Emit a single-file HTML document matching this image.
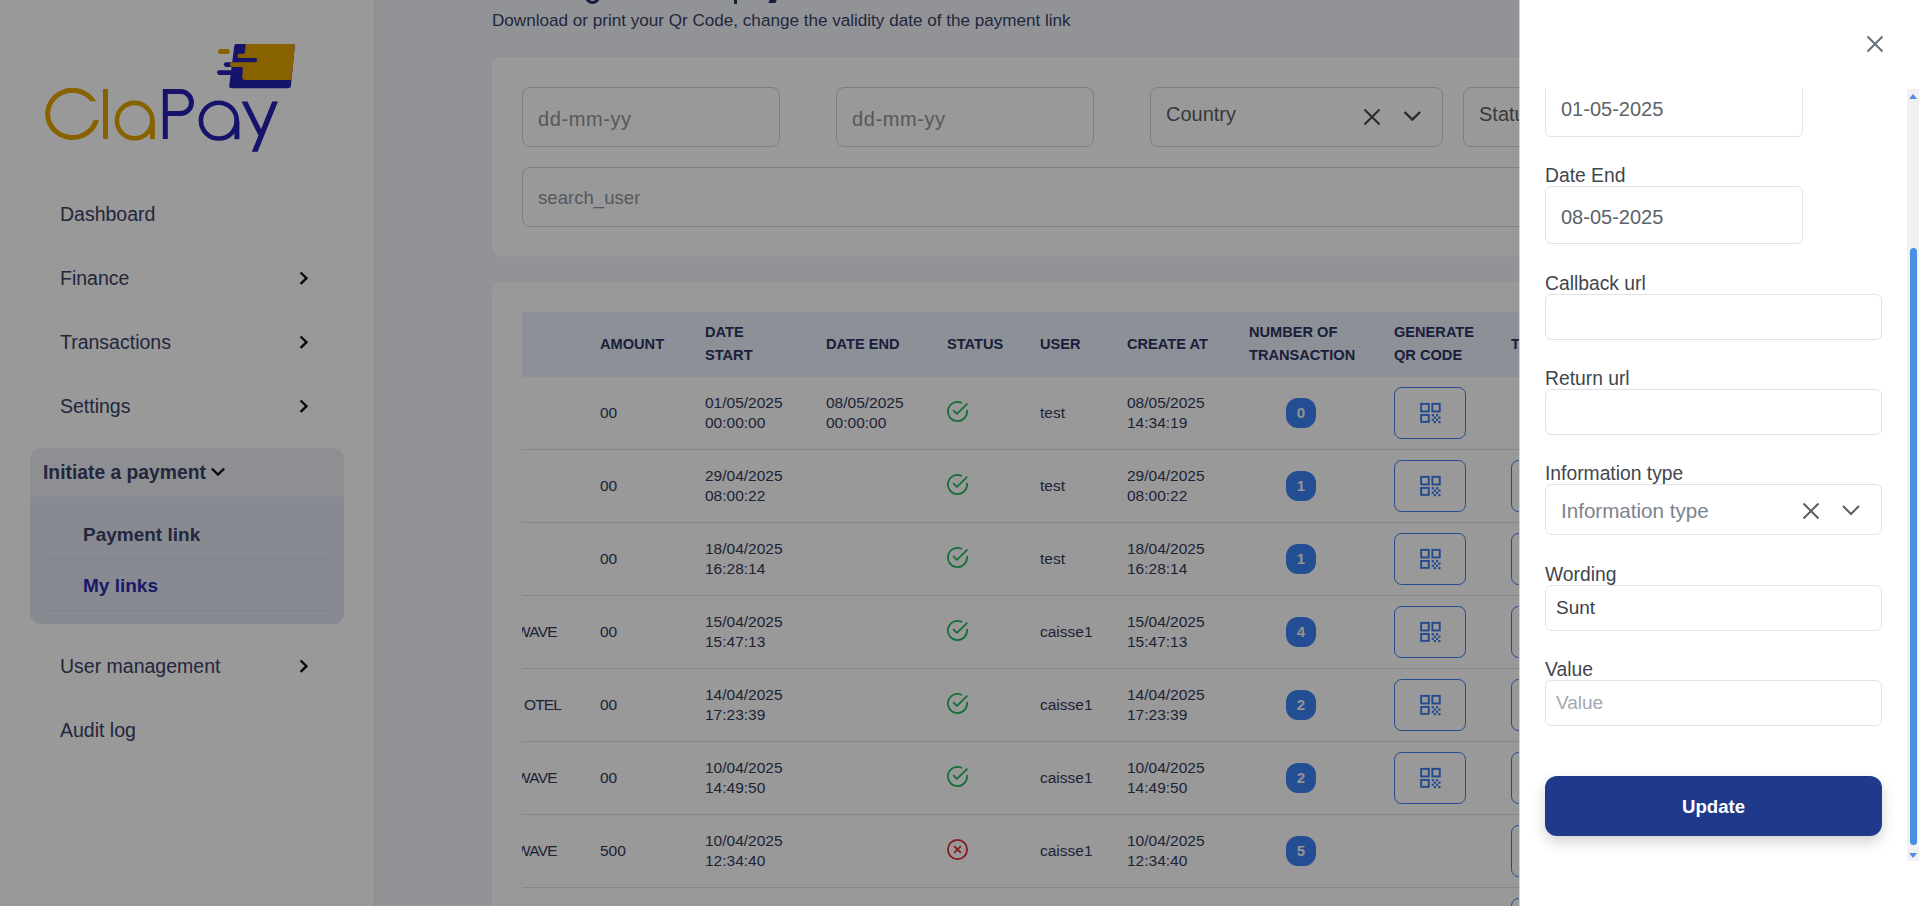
<!DOCTYPE html>
<html><head><meta charset="utf-8">
<style>
*{box-sizing:border-box;margin:0;padding:0}
html,body{width:1919px;height:913px;overflow:hidden;background:#fff;font-family:"Liberation Sans",sans-serif}
.abs{position:absolute}
#page{position:absolute;left:0;top:0;width:1919px;height:906px;background:#f4f6fc;overflow:hidden}
#sidebar{position:absolute;left:0;top:0;width:375px;height:906px;background:#fff;border-right:1px solid #e3e4e8}
.nav{position:absolute;left:60px;font-size:19.5px;color:#3a4166;white-space:nowrap;line-height:1}
.chev{position:absolute;left:300px;width:9px;height:14px}
.card{position:absolute;background:#fff;border:1px solid #f0f1f5;border-radius:10px}
.inp{position:absolute;border:1px solid #cfd3d8;border-radius:8px;background:#fff}
.ph{position:absolute;font-size:20px;color:#8e9399;white-space:nowrap;line-height:1}
.th{position:absolute;font-size:14.6px;font-weight:700;color:#2c3563;line-height:23px;white-space:nowrap}
.td{position:absolute;font-size:15.5px;color:#343a5c;line-height:20px;white-space:nowrap}
.rowline{position:absolute;left:522px;width:1000px;height:1px;background:#dfe1e6}
.badge{position:absolute;width:30px;height:30px;border-radius:12px;background:#3b82f6;color:#f4f4f4;font-size:15px;font-weight:700;text-align:center;line-height:30px}
.qr{position:absolute;width:72px;height:52px;border:1.5px solid #3b7bef;border-radius:7.5px}
.qr svg{position:absolute;left:25px;top:15px}
.tbtn{position:absolute;left:1511px;width:72px;height:52px;border:1.5px solid #3b7bef;border-radius:7.5px}
#overlay{position:absolute;left:0;top:0;width:1520px;height:906px;background:rgba(0,0,0,0.4)}
#panel{position:absolute;left:1519px;top:0;width:400px;height:906px;background:#fff;border-left:1px solid rgba(0,0,0,.175)}
.lbl{position:absolute;left:25px;font-size:19.3px;color:#40464d;white-space:nowrap;line-height:1}
.pin{position:absolute;left:25px;width:337px;border:1px solid #dfe3e8;border-radius:6px;background:#fff}
.val{position:absolute;font-size:20px;color:#5c636a;white-space:nowrap;line-height:1}
</style></head><body>
<div id="page">
  <div id="sidebar">
    <svg class="abs" style="left:0;top:0" width="375" height="170" viewBox="0 0 375 170">
  <path d="M96.3 101.3 A27.3 26.15 0 1 0 99 119.9 L93.8 119.9 A22.3 21.15 0 1 1 90.3 101.3Z" fill="#e5a300"/>
  <rect x="103" y="89" width="5" height="50" fill="#e5a300"/>
  <circle cx="134.6" cy="120.6" r="17.7" fill="none" stroke="#e5a300" stroke-width="4.6"/>
  <rect x="150" y="120.6" width="4.9" height="18.6" fill="#e5a300"/>
  <g fill="none" stroke="#2321b1" stroke-width="5">
    <path d="M165.3 139 V91.5 H180.5 A11 11 0 0 1 180.5 113.5 H165.3"/>

  </g>
  <path d="M241.6 101.5 H247.4 L264 135 H258.2Z M272.2 101.5 H278 L257.6 151.8 H251.8Z" fill="#2321b1"/>
  <circle cx="218.8" cy="120.6" r="17.9" fill="none" stroke="#2321b1" stroke-width="4.6"/>
  <rect x="234.4" y="120.6" width="5" height="18.6" fill="#2321b1"/>
  <path d="M236.5 43.9 H292.6 Q295 43.9 294.8 46.3 L290.9 86 Q290.7 88.3 288.4 88.3 H231.5 Q229 88.3 229.2 86 L234.2 46.2 Q234.4 43.9 236.5 43.9Z" fill="#2321b1"/>
  <path d="M245.8 43.9 H292.6 Q295 43.9 294.8 46.3 L291.5 80 H245 Q242.2 80 242.3 77 L243.3 58 L244.6 53.7Z" fill="#e5a300"/>
  <rect x="237.5" y="53.7" width="16" height="4.6" rx="2.3" fill="#e5a300"/>
  <rect x="236" y="58" width="21" height="4.3" rx="2.1" fill="#2321b1"/>
  <rect x="223.8" y="62.2" width="10" height="4.8" rx="2.4" fill="#2321b1"/>
  <rect x="230" y="62.2" width="18" height="4.8" rx="2.4" fill="#e5a300"/>
  <rect x="217" y="70.2" width="16" height="4.8" rx="2.4" fill="#2321b1"/>
  <rect x="218" y="48.9" width="11.8" height="5" rx="2.5" fill="#e5a300"/>
</svg>
    <div class="nav" style="top:205px">Dashboard</div>
    <div class="nav" style="top:269px">Finance</div><svg class="abs" style="left:298px;top:271px" width="14" height="16" viewBox="0 0 14 16"><path d="M2.6 1.5 L8.5 7.2 L2.6 12.9" fill="none" stroke="#111" stroke-width="2.4"/></svg>
    <div class="nav" style="top:333px">Transactions</div><svg class="abs" style="left:298px;top:335px" width="14" height="16" viewBox="0 0 14 16"><path d="M2.6 1.5 L8.5 7.2 L2.6 12.9" fill="none" stroke="#111" stroke-width="2.4"/></svg>
    <div class="nav" style="top:397px">Settings</div><svg class="abs" style="left:298px;top:399px" width="14" height="16" viewBox="0 0 14 16"><path d="M2.6 1.5 L8.5 7.2 L2.6 12.9" fill="none" stroke="#111" stroke-width="2.4"/></svg>
    <div class="abs" style="left:30px;top:448px;width:314px;height:176px;border-radius:11px;background:#eceff5;overflow:hidden">
      <div class="abs" style="left:0;top:49px;width:314px;height:127px;background:#e2e7f2"></div>
      <div class="abs" style="left:13px;top:465px;"></div>
    </div>
    <div class="nav" style="left:43px;top:463px;font-weight:700;font-size:19.3px">Initiate a payment</div>
    <svg class="abs" style="left:209px;top:465px" width="18" height="14" viewBox="0 0 18 14"><path d="M2.8 3.5 L9 9.6 L15.2 3.5" fill="none" stroke="#111" stroke-width="2.4"/></svg>
    <div class="nav" style="left:83px;top:525px;font-weight:700;font-size:19px">Payment link</div>
    <div class="abs" style="left:43px;top:559px;width:289px;height:1px;background:#d9dde5"></div>
    <div class="nav" style="left:83px;top:576px;font-weight:700;font-size:19px;color:#2b2bb0">My links</div>
    <div class="abs" style="left:43px;top:610px;width:289px;height:1px;background:#d9dde5"></div>
    <div class="nav" style="top:657px">User management</div><svg class="abs" style="left:298px;top:659px" width="14" height="16" viewBox="0 0 14 16"><path d="M2.6 1.5 L8.5 7.2 L2.6 12.9" fill="none" stroke="#111" stroke-width="2.4"/></svg>
    <div class="nav" style="top:721px">Audit log</div>
  </div>
  <div class="abs" style="left:492px;top:-21px;font-size:28px;font-weight:700;color:#2f365c;white-space:nowrap;line-height:1">&nbsp;</div>
  <div class="abs" style="left:585px;top:-4px;width:15px;height:8px;border:3px solid #2a3160;border-top:none;border-radius:0 0 8px 8px"></div>
  <div class="abs" style="left:734px;top:0;width:3px;height:4px;background:#2a3160"></div>
  <div class="abs" style="left:769px;top:0;width:7px;height:3px;background:#2a3160;transform:skewX(-25deg)"></div>
  <div class="abs" style="left:492px;top:11px;font-size:17.1px;color:#3a4166;white-space:nowrap;line-height:20px">Download or print your Qr Code, change the validity date of the payment link</div>
  <div class="card" style="left:491px;top:56px;width:1400px;height:202px"></div>
  <div class="inp" style="left:522px;top:87px;width:258px;height:60px"></div><div class="ph" style="left:538px;top:109px;letter-spacing:0.6px">dd-mm-yy</div>
  <div class="inp" style="left:836px;top:87px;width:258px;height:60px"></div><div class="ph" style="left:852px;top:109px;letter-spacing:0.6px">dd-mm-yy</div>
  <div class="inp" style="left:1150px;top:87px;width:293px;height:60px"></div><div class="ph" style="left:1166px;top:104px;color:#5a6068">Country</div>
  <svg class="abs" style="left:1361px;top:106px" width="22" height="22" viewBox="0 0 22 22"><path d="M3.5 3.5 L18.5 18.5 M18.5 3.5 L3.5 18.5" stroke="#44494f" stroke-width="2" fill="none"/></svg>
  <svg class="abs" style="left:1401px;top:107px" width="22" height="18" viewBox="0 0 22 18"><path d="M3.5 5 L11.3 12.6 L19.1 5" stroke="#44494f" stroke-width="2.4" fill="none"/></svg>
  <div class="inp" style="left:1463px;top:87px;width:293px;height:60px"></div><div class="ph" style="left:1479px;top:104px;color:#5a6068">Status</div>
  <div class="inp" style="left:522px;top:167px;width:1340px;height:60px"></div><div class="ph" style="left:538px;top:189px;font-size:18.6px">search_user</div>
  <div class="card" style="left:491px;top:281px;width:1400px;height:700px"></div>
  <div class="abs" style="left:522px;top:312px;width:1000px;height:65px;background:#ebf0fa"></div>
  <div class="th" style="left:600px;top:333px">AMOUNT</div>
  <div class="th" style="left:705px;top:321px">DATE<br>START</div>
  <div class="th" style="left:826px;top:333px">DATE END</div>
  <div class="th" style="left:947px;top:333px">STATUS</div>
  <div class="th" style="left:1040px;top:333px">USER</div>
  <div class="th" style="left:1127px;top:333px">CREATE AT</div>
  <div class="th" style="left:1249px;top:321px">NUMBER OF<br>TRANSACTION</div>
  <div class="th" style="left:1394px;top:321px">GENERATE<br>QR CODE</div>
  <div class="th" style="left:1511px;top:333px">T</div>
  <div class="td" style="left:600px;top:403.0px">00</div>
  <div class="td" style="left:705px;top:393.0px">01/05/2025<br>00:00:00</div>
  <div class="td" style="left:826px;top:393.0px">08/05/2025<br>00:00:00</div>
  <div class="abs" style="left:946px;top:399.5px;width:23px;height:23px"><svg width="23" height="23" viewBox="0 0 24 24" fill="none" stroke="#22b95c" stroke-width="1.85" stroke-linecap="round" stroke-linejoin="round"><path d="M22 11.08V12a10 10 0 1 1-5.93-9.14"/><polyline points="21.8 4.2 11.4 14.4 8 11"/></svg></div>
  <div class="td" style="left:1040px;top:403.0px">test</div>
  <div class="td" style="left:1127px;top:393.0px">08/05/2025<br>14:34:19</div>
  <div class="badge" style="left:1286px;top:398.0px">0</div>
  <div class="qr" style="left:1394px;top:387.0px"></div><svg style="position:absolute;left:1419px;top:402.0px" width="24" height="22" viewBox="0 0 24 22"><g fill="none" stroke="#3b7bef" stroke-width="1.9"><rect x="2.15" y="1.85" width="7.6" height="7.6"/><rect x="13.35" y="1.85" width="7.4" height="7.6"/><rect x="2.15" y="12.95" width="7.6" height="6.9"/></g><g fill="#3b7bef"><rect x="12.7" y="12.1" width="2.2" height="2.2"/><rect x="17.0" y="12.1" width="2.2" height="2.2"/><rect x="14.8" y="14.5" width="2.2" height="2.2"/><rect x="19.3" y="14.5" width="2.2" height="2.2"/><rect x="12.7" y="16.7" width="2.2" height="2.2"/><rect x="17.0" y="16.7" width="2.2" height="2.2"/><rect x="14.8" y="19.0" width="2.2" height="2.2"/><rect x="19.3" y="19.0" width="2.2" height="2.2"/></g></svg>
  <div class="rowline" style="top:448.5px"></div>
  <div class="td" style="left:600px;top:476.0px">00</div>
  <div class="td" style="left:705px;top:466.0px">29/04/2025<br>08:00:22</div>
  <div class="abs" style="left:946px;top:472.5px;width:23px;height:23px"><svg width="23" height="23" viewBox="0 0 24 24" fill="none" stroke="#22b95c" stroke-width="1.85" stroke-linecap="round" stroke-linejoin="round"><path d="M22 11.08V12a10 10 0 1 1-5.93-9.14"/><polyline points="21.8 4.2 11.4 14.4 8 11"/></svg></div>
  <div class="td" style="left:1040px;top:476.0px">test</div>
  <div class="td" style="left:1127px;top:466.0px">29/04/2025<br>08:00:22</div>
  <div class="badge" style="left:1286px;top:471.0px">1</div>
  <div class="qr" style="left:1394px;top:460.0px"></div><svg style="position:absolute;left:1419px;top:475.0px" width="24" height="22" viewBox="0 0 24 22"><g fill="none" stroke="#3b7bef" stroke-width="1.9"><rect x="2.15" y="1.85" width="7.6" height="7.6"/><rect x="13.35" y="1.85" width="7.4" height="7.6"/><rect x="2.15" y="12.95" width="7.6" height="6.9"/></g><g fill="#3b7bef"><rect x="12.7" y="12.1" width="2.2" height="2.2"/><rect x="17.0" y="12.1" width="2.2" height="2.2"/><rect x="14.8" y="14.5" width="2.2" height="2.2"/><rect x="19.3" y="14.5" width="2.2" height="2.2"/><rect x="12.7" y="16.7" width="2.2" height="2.2"/><rect x="17.0" y="16.7" width="2.2" height="2.2"/><rect x="14.8" y="19.0" width="2.2" height="2.2"/><rect x="19.3" y="19.0" width="2.2" height="2.2"/></g></svg>
  <div class="tbtn" style="top:460.0px"></div>
  <div class="rowline" style="top:521.5px"></div>
  <div class="td" style="left:600px;top:549.0px">00</div>
  <div class="td" style="left:705px;top:539.0px">18/04/2025<br>16:28:14</div>
  <div class="abs" style="left:946px;top:545.5px;width:23px;height:23px"><svg width="23" height="23" viewBox="0 0 24 24" fill="none" stroke="#22b95c" stroke-width="1.85" stroke-linecap="round" stroke-linejoin="round"><path d="M22 11.08V12a10 10 0 1 1-5.93-9.14"/><polyline points="21.8 4.2 11.4 14.4 8 11"/></svg></div>
  <div class="td" style="left:1040px;top:549.0px">test</div>
  <div class="td" style="left:1127px;top:539.0px">18/04/2025<br>16:28:14</div>
  <div class="badge" style="left:1286px;top:544.0px">1</div>
  <div class="qr" style="left:1394px;top:533.0px"></div><svg style="position:absolute;left:1419px;top:548.0px" width="24" height="22" viewBox="0 0 24 22"><g fill="none" stroke="#3b7bef" stroke-width="1.9"><rect x="2.15" y="1.85" width="7.6" height="7.6"/><rect x="13.35" y="1.85" width="7.4" height="7.6"/><rect x="2.15" y="12.95" width="7.6" height="6.9"/></g><g fill="#3b7bef"><rect x="12.7" y="12.1" width="2.2" height="2.2"/><rect x="17.0" y="12.1" width="2.2" height="2.2"/><rect x="14.8" y="14.5" width="2.2" height="2.2"/><rect x="19.3" y="14.5" width="2.2" height="2.2"/><rect x="12.7" y="16.7" width="2.2" height="2.2"/><rect x="17.0" y="16.7" width="2.2" height="2.2"/><rect x="14.8" y="19.0" width="2.2" height="2.2"/><rect x="19.3" y="19.0" width="2.2" height="2.2"/></g></svg>
  <div class="tbtn" style="top:533.0px"></div>
  <div class="rowline" style="top:594.5px"></div>
  <div class="abs" style="left:522px;top:622.0px;width:60px;height:20px;overflow:hidden"><div class="td" style="left:-6px;top:0;letter-spacing:-0.8px">WAVE</div></div>
  <div class="td" style="left:600px;top:622.0px">00</div>
  <div class="td" style="left:705px;top:612.0px">15/04/2025<br>15:47:13</div>
  <div class="abs" style="left:946px;top:618.5px;width:23px;height:23px"><svg width="23" height="23" viewBox="0 0 24 24" fill="none" stroke="#22b95c" stroke-width="1.85" stroke-linecap="round" stroke-linejoin="round"><path d="M22 11.08V12a10 10 0 1 1-5.93-9.14"/><polyline points="21.8 4.2 11.4 14.4 8 11"/></svg></div>
  <div class="td" style="left:1040px;top:622.0px">caisse1</div>
  <div class="td" style="left:1127px;top:612.0px">15/04/2025<br>15:47:13</div>
  <div class="badge" style="left:1286px;top:617.0px">4</div>
  <div class="qr" style="left:1394px;top:606.0px"></div><svg style="position:absolute;left:1419px;top:621.0px" width="24" height="22" viewBox="0 0 24 22"><g fill="none" stroke="#3b7bef" stroke-width="1.9"><rect x="2.15" y="1.85" width="7.6" height="7.6"/><rect x="13.35" y="1.85" width="7.4" height="7.6"/><rect x="2.15" y="12.95" width="7.6" height="6.9"/></g><g fill="#3b7bef"><rect x="12.7" y="12.1" width="2.2" height="2.2"/><rect x="17.0" y="12.1" width="2.2" height="2.2"/><rect x="14.8" y="14.5" width="2.2" height="2.2"/><rect x="19.3" y="14.5" width="2.2" height="2.2"/><rect x="12.7" y="16.7" width="2.2" height="2.2"/><rect x="17.0" y="16.7" width="2.2" height="2.2"/><rect x="14.8" y="19.0" width="2.2" height="2.2"/><rect x="19.3" y="19.0" width="2.2" height="2.2"/></g></svg>
  <div class="tbtn" style="top:606.0px"></div>
  <div class="rowline" style="top:667.5px"></div>
  <div class="abs" style="left:522px;top:695.0px;width:60px;height:20px;overflow:hidden"><div class="td" style="left:2px;top:0;letter-spacing:-0.9px">OTEL</div></div>
  <div class="td" style="left:600px;top:695.0px">00</div>
  <div class="td" style="left:705px;top:685.0px">14/04/2025<br>17:23:39</div>
  <div class="abs" style="left:946px;top:691.5px;width:23px;height:23px"><svg width="23" height="23" viewBox="0 0 24 24" fill="none" stroke="#22b95c" stroke-width="1.85" stroke-linecap="round" stroke-linejoin="round"><path d="M22 11.08V12a10 10 0 1 1-5.93-9.14"/><polyline points="21.8 4.2 11.4 14.4 8 11"/></svg></div>
  <div class="td" style="left:1040px;top:695.0px">caisse1</div>
  <div class="td" style="left:1127px;top:685.0px">14/04/2025<br>17:23:39</div>
  <div class="badge" style="left:1286px;top:690.0px">2</div>
  <div class="qr" style="left:1394px;top:679.0px"></div><svg style="position:absolute;left:1419px;top:694.0px" width="24" height="22" viewBox="0 0 24 22"><g fill="none" stroke="#3b7bef" stroke-width="1.9"><rect x="2.15" y="1.85" width="7.6" height="7.6"/><rect x="13.35" y="1.85" width="7.4" height="7.6"/><rect x="2.15" y="12.95" width="7.6" height="6.9"/></g><g fill="#3b7bef"><rect x="12.7" y="12.1" width="2.2" height="2.2"/><rect x="17.0" y="12.1" width="2.2" height="2.2"/><rect x="14.8" y="14.5" width="2.2" height="2.2"/><rect x="19.3" y="14.5" width="2.2" height="2.2"/><rect x="12.7" y="16.7" width="2.2" height="2.2"/><rect x="17.0" y="16.7" width="2.2" height="2.2"/><rect x="14.8" y="19.0" width="2.2" height="2.2"/><rect x="19.3" y="19.0" width="2.2" height="2.2"/></g></svg>
  <div class="tbtn" style="top:679.0px"></div>
  <div class="rowline" style="top:740.5px"></div>
  <div class="abs" style="left:522px;top:768.0px;width:60px;height:20px;overflow:hidden"><div class="td" style="left:-6px;top:0;letter-spacing:-0.8px">WAVE</div></div>
  <div class="td" style="left:600px;top:768.0px">00</div>
  <div class="td" style="left:705px;top:758.0px">10/04/2025<br>14:49:50</div>
  <div class="abs" style="left:946px;top:764.5px;width:23px;height:23px"><svg width="23" height="23" viewBox="0 0 24 24" fill="none" stroke="#22b95c" stroke-width="1.85" stroke-linecap="round" stroke-linejoin="round"><path d="M22 11.08V12a10 10 0 1 1-5.93-9.14"/><polyline points="21.8 4.2 11.4 14.4 8 11"/></svg></div>
  <div class="td" style="left:1040px;top:768.0px">caisse1</div>
  <div class="td" style="left:1127px;top:758.0px">10/04/2025<br>14:49:50</div>
  <div class="badge" style="left:1286px;top:763.0px">2</div>
  <div class="qr" style="left:1394px;top:752.0px"></div><svg style="position:absolute;left:1419px;top:767.0px" width="24" height="22" viewBox="0 0 24 22"><g fill="none" stroke="#3b7bef" stroke-width="1.9"><rect x="2.15" y="1.85" width="7.6" height="7.6"/><rect x="13.35" y="1.85" width="7.4" height="7.6"/><rect x="2.15" y="12.95" width="7.6" height="6.9"/></g><g fill="#3b7bef"><rect x="12.7" y="12.1" width="2.2" height="2.2"/><rect x="17.0" y="12.1" width="2.2" height="2.2"/><rect x="14.8" y="14.5" width="2.2" height="2.2"/><rect x="19.3" y="14.5" width="2.2" height="2.2"/><rect x="12.7" y="16.7" width="2.2" height="2.2"/><rect x="17.0" y="16.7" width="2.2" height="2.2"/><rect x="14.8" y="19.0" width="2.2" height="2.2"/><rect x="19.3" y="19.0" width="2.2" height="2.2"/></g></svg>
  <div class="tbtn" style="top:752.0px"></div>
  <div class="rowline" style="top:813.5px"></div>
  <div class="abs" style="left:522px;top:841.0px;width:60px;height:20px;overflow:hidden"><div class="td" style="left:-6px;top:0;letter-spacing:-0.8px">WAVE</div></div>
  <div class="td" style="left:600px;top:841.0px">500</div>
  <div class="td" style="left:705px;top:831.0px">10/04/2025<br>12:34:40</div>
  <div class="abs" style="left:946px;top:837.5px;width:23px;height:23px"><svg width="23" height="23" viewBox="0 0 24 24" fill="none" stroke="#e02d3a" stroke-width="1.9" stroke-linecap="round" stroke-linejoin="round"><circle cx="12" cy="12" r="10"/><line x1="15" y1="9" x2="9" y2="15"/><line x1="9" y1="9" x2="15" y2="15"/></svg></div>
  <div class="td" style="left:1040px;top:841.0px">caisse1</div>
  <div class="td" style="left:1127px;top:831.0px">10/04/2025<br>12:34:40</div>
  <div class="badge" style="left:1286px;top:836.0px">5</div>
  <div class="tbtn" style="top:825.0px"></div>
  <div class="rowline" style="top:886.5px"></div>
  <div class="tbtn" style="top:898px;height:30px"></div>
</div>
<div id="overlay"></div>
<div id="panel">
  <svg class="abs" style="left:346px;top:35px" width="18" height="18" viewBox="0 0 18 18"><path d="M1.5 1.5 L16.5 16.5 M16.5 1.5 L1.5 16.5" stroke="#66707a" stroke-width="2" fill="none"/></svg>
  <div class="abs" style="left:0;top:89px;width:387px;height:772px;overflow:hidden">
    <div class="pin" style="left:25px;top:-10px;width:258px;height:58px"></div>
    <div class="val" style="left:41px;top:10px">01-05-2025</div>
    <div class="lbl" style="top:77px">Date End</div>
    <div class="pin" style="left:25px;top:97px;width:258px;height:58px"></div>
    <div class="val" style="left:41px;top:118px">08-05-2025</div>
    <div class="lbl" style="top:185px">Callback url</div>
    <div class="pin" style="top:205px;height:46px"></div>
    <div class="lbl" style="top:280px">Return url</div>
    <div class="pin" style="top:300px;height:46px"></div>
    <div class="lbl" style="top:375px">Information type</div>
    <div class="pin" style="top:395px;height:51px"></div>
    <div class="val" style="left:41px;top:412px;color:#7d848c;font-size:20.6px">Information type</div>
    <svg class="abs" style="left:280px;top:411px" width="22" height="22" viewBox="0 0 22 22"><path d="M3.5 3.5 L18.5 18.5 M18.5 3.5 L3.5 18.5" stroke="#5b5f64" stroke-width="2" fill="none"/></svg>
    <svg class="abs" style="left:320px;top:412px" width="22" height="18" viewBox="0 0 22 18"><path d="M3 5 L11 13 L19 5" stroke="#5b5f64" stroke-width="2" fill="none"/></svg>
    <div class="lbl" style="top:476px">Wording</div>
    <div class="pin" style="top:496px;height:46px"></div>
    <div class="val" style="left:36px;top:509px;font-size:19px;color:#3d434a">Sunt</div>
    <div class="lbl" style="top:571px">Value</div>
    <div class="pin" style="top:591px;height:46px"></div>
    <div class="val" style="left:36px;top:604px;font-size:19px;color:#a2a8b0">Value</div>
    <div class="abs" style="left:25px;top:687px;width:337px;height:60px;border-radius:12px;background:#1f3a8a;box-shadow:0 6px 14px rgba(0,0,0,0.18)"></div>
    <div class="abs" style="left:25px;top:708px;width:337px;text-align:center;font-size:18.6px;font-weight:700;color:#fff;line-height:20px">Update</div>
  </div>
  <div class="abs" style="left:387px;top:89px;width:12px;height:772px;background:#f1f1f1"></div>
  <svg class="abs" style="left:388px;top:91px" width="10" height="10" viewBox="0 0 10 10"><path d="M1 8 L5 3 L9 8Z" fill="#4a90e2"/></svg>
  <div class="abs" style="left:390px;top:248px;width:7px;height:597px;border-radius:4px;background:#4a90e2"></div>
  <svg class="abs" style="left:388px;top:851px" width="10" height="10" viewBox="0 0 10 10"><path d="M1 2 L5 7 L9 2Z" fill="#4a90e2"/></svg>
</div>
</body></html>
